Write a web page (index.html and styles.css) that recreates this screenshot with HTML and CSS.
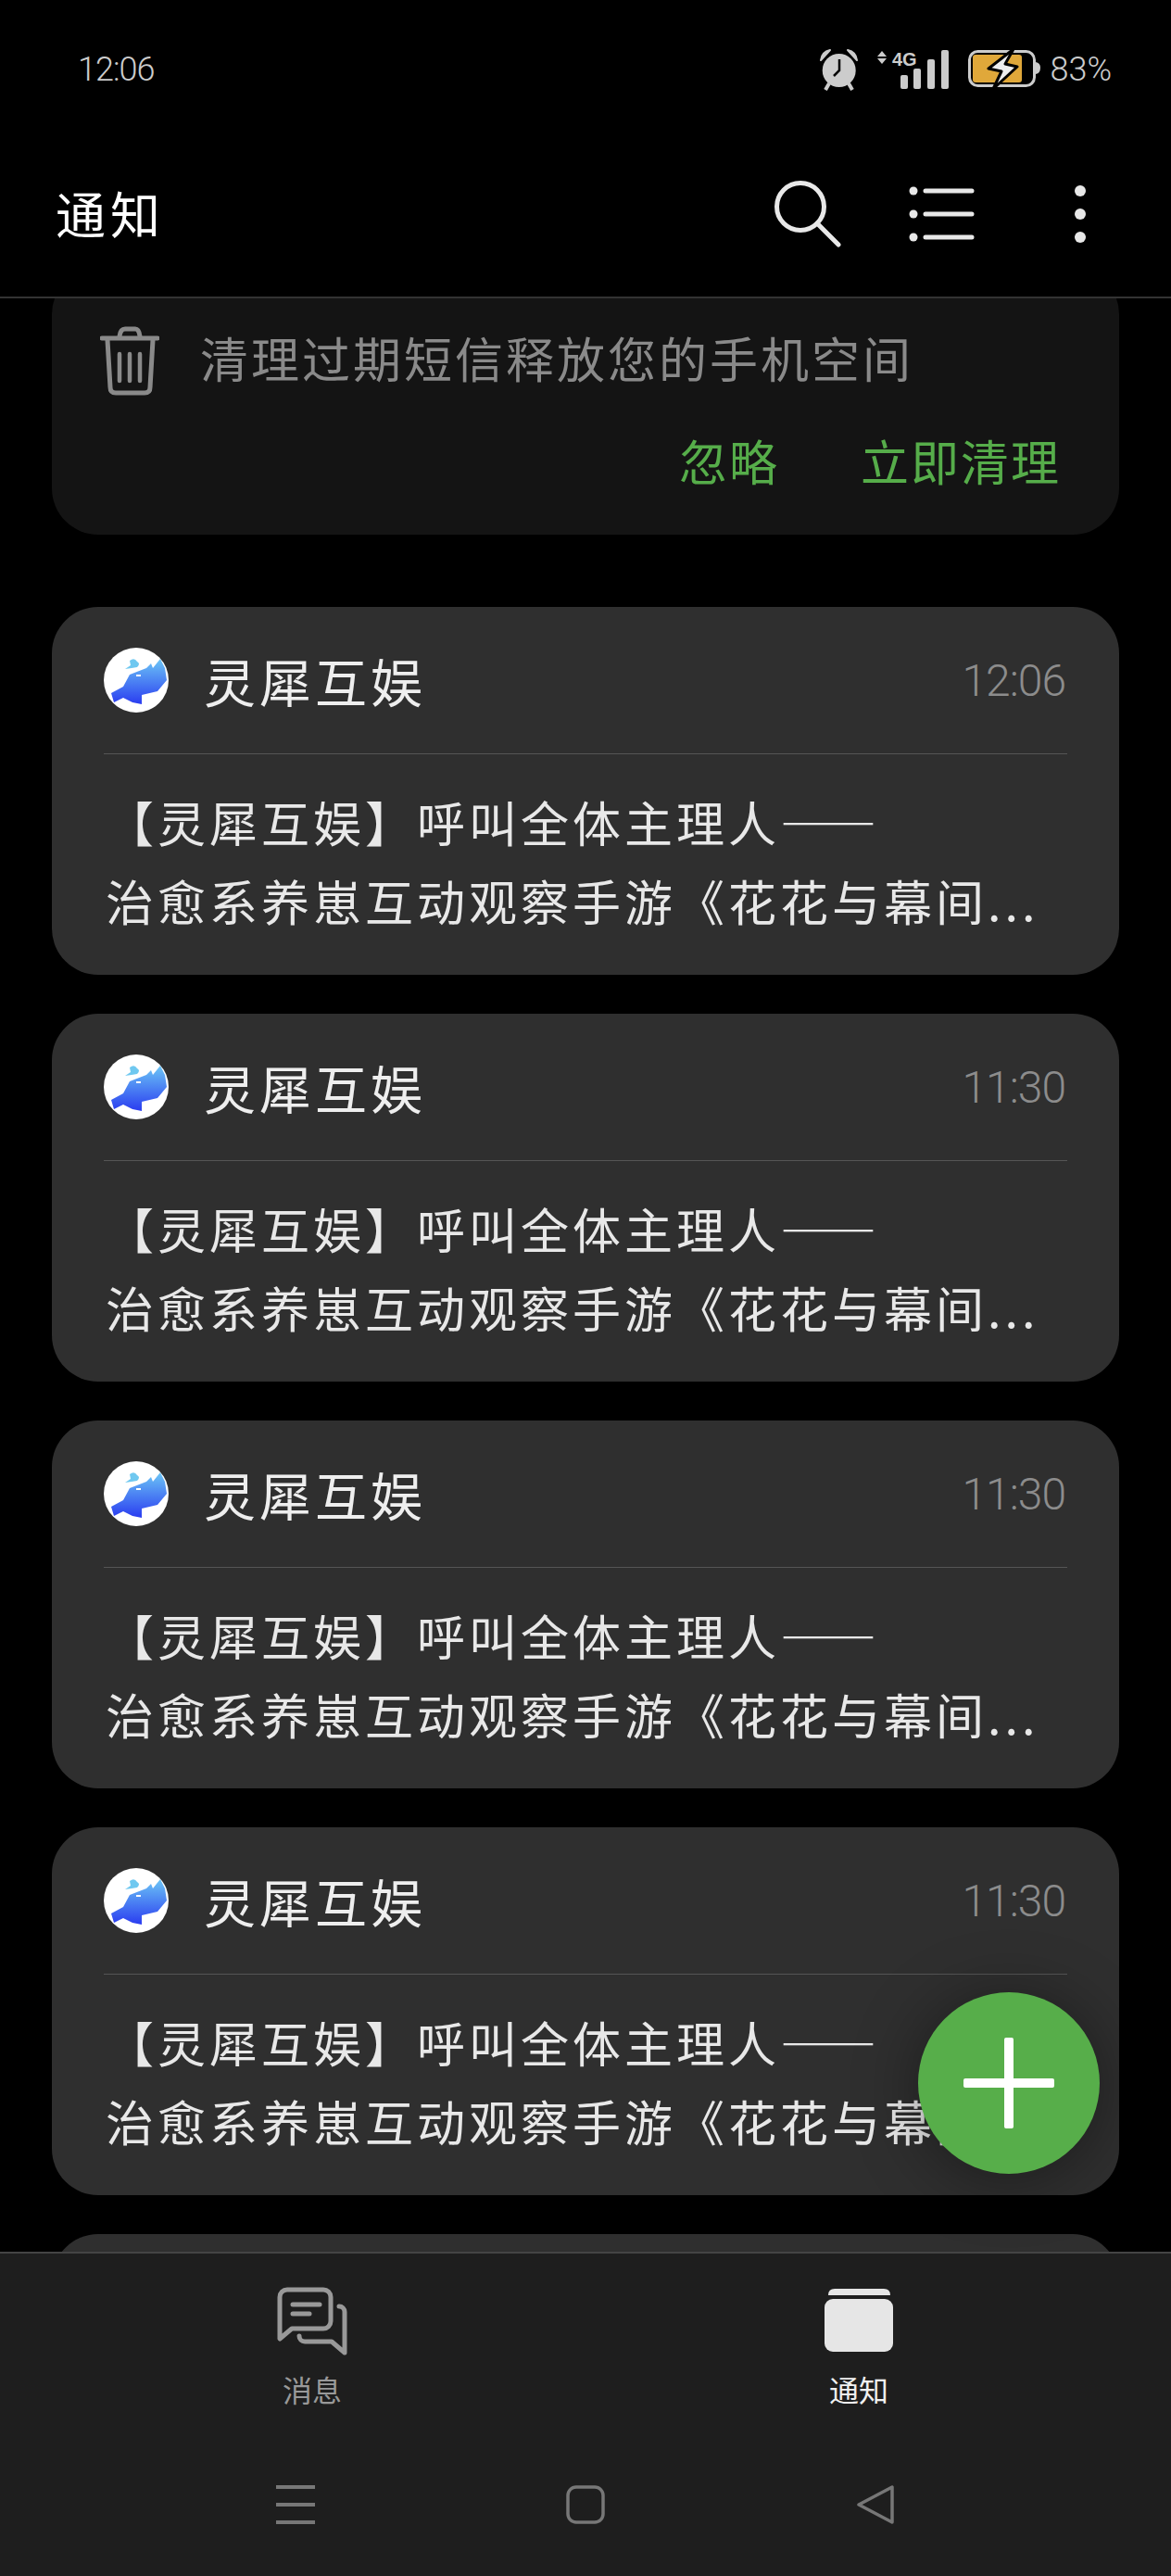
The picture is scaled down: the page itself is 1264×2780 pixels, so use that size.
FILE: index.html
```html
<!DOCTYPE html>
<html lang="zh-CN">
<head>
    <meta charset="UTF-8">
    <meta name="viewport" content="width=device-width, initial-scale=1.0">
    <title>通知</title>
    <link rel="stylesheet" href="styles.css">
</head>
<body>

    <!-- logo shared by all the cards -->
    <svg class="defs" width="0" height="0">
        <defs>
            <linearGradient id="rhino-fill" x1="0" y1="0" x2="0" y2="1">
                <stop offset="0" stop-color="#6cc6f6"/>
                <stop offset="1" stop-color="#2a3cf0"/>
            </linearGradient>
            <symbol id="rhino" viewBox="0 0 70 70">
                <circle cx="35" cy="35" r="35" fill="#fff"/>
                <path d="M8 49 L21 42 L28 29 L46 22 L51 17 L53 22 L61 12 L66 22 L68 35 L58 47 L41 51 L41 61 L31 59 L21 54 L11 59 Z" fill="url(#rhino-fill)"/>
                <path d="M23 23 L29 19 L28 14 Q33 10 36 15 Q40 17 36 21 L30 22 Z" fill="#6fc8f0"/>
                <rect x="35" y="29" width="5" height="2" fill="#fff"/>
            </symbol>
        </defs>
    </svg>

    <header class="top">
        <div class="status">
            <span class="clock">12:06</span>
            <div class="status-icons">
                <svg class="ic-alarm" width="43" height="46" viewBox="0 0 43 46">
                    <circle cx="21.7" cy="24" r="18" fill="#ccc"/>
                    <path d="M2 13 Q3 4 12 2 Z M41 13 Q40 4 31 2 Z" fill="#ccc" stroke="#ccc" stroke-width="2" stroke-linejoin="round"/>
                    <path d="M11 38 L7 45 M32 38 L36 45" stroke="#ccc" stroke-width="4"/>
                    <path d="M22 12 V24 L16 30" fill="none" stroke="#000" stroke-width="2.5"/>
                </svg>
                <svg class="ic-signal" width="78" height="46" viewBox="0 0 78 46">
                    <path d="M5 3 L10 9 H0 Z M5 17 L10 11 H0 Z" fill="#ccc"/>
                    <text class="net" x="16" y="19">4G</text>
                    <rect x="25" y="29" width="8" height="15" rx="2" fill="#ccc"/>
                    <rect x="39" y="22" width="8" height="22" rx="2" fill="#ccc"/>
                    <rect x="54" y="12" width="8" height="32" rx="2" fill="#ccc"/>
                    <rect x="69" y="2" width="8" height="42" rx="2" fill="#ccc"/>
                </svg>
                <svg class="ic-battery" width="78" height="46" viewBox="0 0 78 46">
                    <rect x="1.5" y="3.5" width="70" height="37" rx="9" fill="none" stroke="#ccc" stroke-width="3"/>
                    <rect x="5" y="7" width="53" height="30" rx="3" fill="#e0a83a"/>
                    <path d="M73 15 Q78 16 78 21 Q78 27 73 28 Z" fill="#ccc"/>
                    <path d="M49 1 L22 22 L36 25 L27 44 L53 20 L40 17 Z" fill="#eee" stroke="#000" stroke-width="3" stroke-linejoin="round"/>
                </svg>
                <span class="percent">83%</span>
            </div>
        </div>
        <div class="toolbar">
            <h1>通知</h1>
            <div class="tools">
                <svg width="80" height="80" viewBox="0 0 80 80" fill="none" stroke="#e8e8e8" stroke-width="5" stroke-linecap="round">
                    <circle cx="34" cy="33" r="25.5"/>
                    <path d="M52 51 L75 74"/>
                </svg>
                <svg width="80" height="80" viewBox="0 0 80 80" fill="none" stroke="#e8e8e8" stroke-width="5" stroke-linecap="round">
                    <path d="M21 16 H71 M21 41 H71 M21 66 H71"/>
                    <g fill="#e8e8e8" stroke="none">
                        <circle cx="8" cy="16" r="4.5"/>
                        <circle cx="8" cy="41" r="4.5"/>
                        <circle cx="8" cy="66" r="4.5"/>
                    </g>
                </svg>
                <svg width="80" height="80" viewBox="0 0 80 80" fill="#e8e8e8">
                    <circle cx="40" cy="16" r="6"/>
                    <circle cx="40" cy="41" r="6"/>
                    <circle cx="40" cy="66" r="6"/>
                </svg>
            </div>
        </div>
    </header>

    <main class="list">
        <section class="notice">
            <div class="notice-row">
                <svg width="64" height="76" viewBox="0 0 64 76" fill="none" stroke="#8a8a8a" stroke-width="5" stroke-linecap="round" stroke-linejoin="round">
                    <path d="M2 13 H62"/>
                    <path d="M21 11 Q22 3 27 3 H38 Q42 3 43 11"/>
                    <path d="M8 15 L11 66 Q11 72 17 72 H48 Q54 72 54 66 L57 15"/>
                    <path d="M21 30 V59 M32 30 V59 M43 30 V59" stroke-width="4.5"/>
                </svg>
                <p>清理过期短信释放您的手机空间</p>
            </div>
            <div class="notice-actions">
                <span>忽略</span>
                <span>立即清理</span>
            </div>
        </section>

        <article class="card">
            <div class="card-head">
                <svg class="avatar"><use href="#rhino"/></svg>
                <span class="sender">灵犀互娱</span>
                <span class="time">12:06</span>
            </div>
            <p class="card-text">【灵犀互娱】呼叫全体主理人——<br>治愈系养崽互动观察手游《花花与幕间...</p>
        </article>

        <article class="card">
            <div class="card-head">
                <svg class="avatar"><use href="#rhino"/></svg>
                <span class="sender">灵犀互娱</span>
                <span class="time">11:30</span>
            </div>
            <p class="card-text">【灵犀互娱】呼叫全体主理人——<br>治愈系养崽互动观察手游《花花与幕间...</p>
        </article>

        <article class="card">
            <div class="card-head">
                <svg class="avatar"><use href="#rhino"/></svg>
                <span class="sender">灵犀互娱</span>
                <span class="time">11:30</span>
            </div>
            <p class="card-text">【灵犀互娱】呼叫全体主理人——<br>治愈系养崽互动观察手游《花花与幕间...</p>
        </article>

        <article class="card">
            <div class="card-head">
                <svg class="avatar"><use href="#rhino"/></svg>
                <span class="sender">灵犀互娱</span>
                <span class="time">11:30</span>
            </div>
            <p class="card-text">【灵犀互娱】呼叫全体主理人——<br>治愈系养崽互动观察手游《花花与幕间...</p>
        </article>

        <article class="card"></article>
    </main>

    <button class="fab" type="button" aria-label="新建"></button>

    <footer class="bottom">
        <nav class="tabs">
            <div class="tab">
                <svg width="76" height="74" viewBox="0 0 76 74" fill="none" stroke="#999" stroke-width="5" stroke-linecap="round" stroke-linejoin="round">
                    <path d="M3 56 V11 A8 8 0 0 1 11 3 H50 A8 8 0 0 1 58 11 V37 A8 8 0 0 1 50 45 H16 Z"/>
                    <path d="M17 19 H46 M17 29 H35"/>
                    <path d="M67 21 A6 6 0 0 1 73 27 V71 L59 59 H30 A6 6 0 0 1 24 53"/>
                </svg>
                <span>消息</span>
            </div>
            <div class="tab active">
                <svg width="76" height="74" viewBox="0 0 76 74" fill="#e6e6e6">
                    <path d="M5 9 Q5 2 12 2 H65 Q72 2 72 9 Z"/>
                    <rect x="1" y="13" width="74" height="57" rx="9"/>
                </svg>
                <span>通知</span>
            </div>
        </nav>
        <div class="sysnav">
            <svg width="42" height="42" viewBox="0 0 42 42" fill="#777">
                <rect x="0" y="0" width="42" height="4"/>
                <rect x="0" y="19" width="42" height="4"/>
                <rect x="0" y="38" width="42" height="4"/>
            </svg>
            <svg width="42" height="42" viewBox="0 0 42 42" fill="none" stroke="#777" stroke-width="3.5">
                <rect x="2" y="2" width="38" height="38" rx="9"/>
            </svg>
            <svg width="42" height="42" viewBox="0 0 42 42" fill="none" stroke="#777" stroke-width="3.5" stroke-linejoin="round">
                <path d="M39 2 V40 L3 21 Z"/>
            </svg>
        </div>
    </footer>

</body>
</html>
```

FILE: styles.css
```css
/* base */
body {
    position: relative;
    display: flex;
    flex-direction: column;
    width: 1264px;
    height: 2780px;
    margin: 0;
    overflow: hidden;
    background-color: #000;
    font-family: "Noto Sans CJK SC", "Noto Sans", sans-serif;
    color: #e8e8e8;
}
h1, p {
    margin: 0;
    font-weight: 400;
}
.defs {
    position: absolute;
}

/* status bar + title */
.top {
    flex: none;
    background-color: #000;
    border-bottom: 2px solid #333;
    position: relative;
    z-index: 1;
}
.status {
    display: flex;
    align-items: center;
    justify-content: space-between;
    height: 150px;
    padding: 0 64px 0 84px;
}
.clock, .percent, .time {
    font-family: Roboto, "Liberation Sans", sans-serif;
    font-weight: 300;
}
.clock {
    font-size: 36px;
    letter-spacing: -1px;
    color: #ccc;
}
.status-icons {
    display: flex;
    align-items: center;
    gap: 20px;
}
.status-icons svg {
    display: block;
}
.net {
    font-family: "Liberation Sans", sans-serif;
    font-size: 20px;
    font-weight: 700;
    fill: #ccc;
}
.percent {
    margin-left: -10px;
    font-size: 36px;
    color: #ccc;
}
.toolbar {
    display: flex;
    align-items: center;
    justify-content: space-between;
    height: 160px;
    padding: 0 58px 10px 60px;
}
.toolbar h1 {
    font-size: 54px;
    line-height: 70px;
    letter-spacing: 5px;
    color: #fff;
}
.tools {
    display: flex;
    gap: 68px;
}
.tools svg {
    display: block;
}

/* scrolling list */
.list {
    flex: 1;
    min-height: 0;
    overflow: hidden;
    padding: 0 56px;
}
.notice {
    margin-top: -33px;
    margin-bottom: 78px;
    padding: 63px 63px 50px 52px;
    background-color: #141414;
    border-radius: 50px;
}
.notice-row {
    display: flex;
    gap: 44px;
    color: #8a8a8a;
}
.notice-row p {
    font-size: 52px;
    line-height: 68px;
    letter-spacing: 3px;
}
.notice-actions {
    display: flex;
    justify-content: flex-end;
    gap: 88px;
    margin-top: 39px;
    font-size: 52px;
    line-height: 60px;
    letter-spacing: 2px;
    color: #56ad4a;
}
.card {
    height: 397px;
    box-sizing: border-box;
    margin-bottom: 42px;
    padding: 0 56px;
    background-color: #2f2f2f;
    border-radius: 50px;
}
.card-head {
    display: flex;
    align-items: center;
    height: 158px;
    border-bottom: 1px solid #555;
}
.avatar {
    flex: none;
    width: 70px;
    height: 70px;
    margin-right: 38px;
}
.sender {
    flex: 1;
    font-size: 56px;
    line-height: 70px;
    letter-spacing: 4px;
    color: #eee;
}
.time {
    margin-right: 2px;
    font-size: 48px;
    letter-spacing: -1px;
    color: #8c8c8c;
}
.card-text {
    padding: 30px 0 0 2px;
    font-size: 52px;
    line-height: 85px;
    letter-spacing: 4px;
    white-space: nowrap;
    color: #e8e8e8;
}

/* add button */
.fab {
    position: absolute;
    left: 991px;
    top: 2150px;
    width: 196px;
    height: 196px;
    padding: 0;
    border: none;
    border-radius: 50%;
    background-color: #57ae4a;
    box-shadow: 0 6px 70px rgba(0, 0, 0, 0.4);
}
.fab::before, .fab::after {
    content: "";
    position: absolute;
    background-color: #fff;
    border-radius: 2px;
}
.fab::before {
    left: 49px;
    top: 93px;
    width: 98px;
    height: 10px;
}
.fab::after {
    left: 93px;
    top: 49px;
    width: 10px;
    height: 98px;
}

/* bottom tabs */
.bottom {
    flex: none;
    height: 350px;
    box-sizing: border-box;
    border-top: 2px solid #444;
    background-color: #1e1e1e;
    position: relative;
    z-index: 1;
}
.tabs {
    display: grid;
    grid-template-columns: 1fr 1fr;
    padding: 36px 42px 0;
}
.tab {
    display: flex;
    flex-direction: column;
    align-items: center;
    font-size: 32px;
    line-height: 40px;
    color: #999;
}
.tab svg {
    display: block;
    margin-bottom: 16px;
}
.tab.active {
    color: #f0f0f0;
}
.sysnav {
    display: flex;
    justify-content: center;
    gap: 271px;
    margin-top: 84px;
}
.sysnav svg {
    display: block;
}
```
